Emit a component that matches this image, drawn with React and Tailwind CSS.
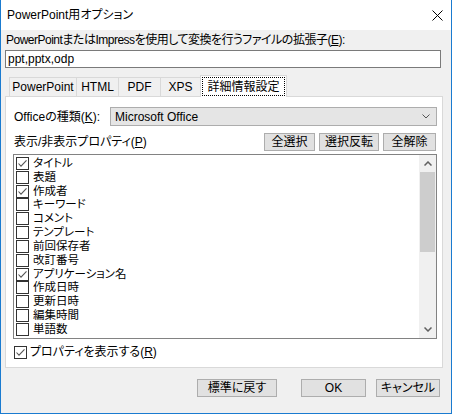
import React from "react";

function Check({ checked }) {
  return (
    <span className="w-[13px] h-[13px] shrink-0 border border-[#333] bg-white flex items-center justify-center">
      {checked && (
        <svg width="11" height="11" viewBox="0 0 11 11">
          <polyline points="1.5,5.5 4,8.2 9.5,2.3" fill="none" stroke="#555" strokeWidth="1.1" />
        </svg>
      )}
    </span>
  );
}

function Btn({ w, children }) {
  return (
    <div className={`${w} h-[18px] border border-[#adadad] bg-[#e1e1e1] flex items-center justify-center`}>{children}</div>
  );
}

const items = [
  ["タイトル", true],
  ["表題", false],
  ["作成者", true],
  ["キーワード", false],
  ["コメント", false],
  ["テンプレート", false],
  ["前回保存者", false],
  ["改訂番号", false],
  ["アプリケーション名", true],
  ["作成日時", false],
  ["更新日時", false],
  ["編集時間", false],
  ["単語数", false],
];

export default function App() {
  return (
    <div className="w-[452px] h-[414px] bg-[#f0f0f0] border-x border-b border-[#1a7bd0] flex flex-col text-[12px] leading-[14px] text-black font-['Liberation_Sans','Noto_Sans_CJK_JP',sans-serif] [font-feature-settings:'palt']">
      <div className="h-[30px] bg-white flex items-center justify-between pl-[6px] pr-[8px] shrink-0">
        <span>PowerPoint用オプション</span>
        <svg width="11" height="11" viewBox="0 0 11 11">
          <path d="M0.5 0.5 L10.5 10.5 M10.5 0.5 L0.5 10.5" stroke="#000" strokeWidth="1" />
        </svg>
      </div>
      <div className="h-[20px] pl-[5px] pt-[3px] shrink-0 tracking-[-0.5px]">
        PowerPointまたはImpressを使用して変換を行うファイルの拡張子(<span className="underline">E</span>):
      </div>
      <div className="ml-[4px] w-[436px] h-[18px] border border-[#7a7a7a] bg-white px-[2px] flex items-center shrink-0">
        ppt,pptx,odp
      </div>
      <div className="mt-[7px] h-[21px] ml-[8px] flex items-end shrink-0">
        <div className="w-[67px] h-[19px] border-t border-l border-[#d9d9d9] flex items-center justify-center">PowerPoint</div>
        <div className="w-[42px] h-[19px] border-t border-l border-[#d9d9d9] flex items-center justify-center">HTML</div>
        <div className="w-[42px] h-[19px] border-t border-l border-[#d9d9d9] flex items-center justify-center">PDF</div>
        <div className="w-[40px] h-[19px] border-t border-l border-[#d9d9d9] flex items-center justify-center">XPS</div>
        <div className="w-[87px] h-[22px] -mb-[1px] z-10 border-t border-x border-[#d9d9d9] bg-white flex p-[1px]">
          <div className="flex-1 border border-dotted border-black flex items-center justify-center">詳細情報設定</div>
        </div>
      </div>
      <div className="ml-[4px] w-[438px] h-[272px] border border-[#d9d9d9] bg-white flex flex-col pr-[5px] shrink-0">
        <div className="mt-[10px] flex items-center">
          <div className="w-[104px] pl-[8px]">
            Officeの種類(<span className="underline">K</span>):
          </div>
          <div className="w-[327px] h-[19px] border border-[#adadad] bg-[#e5e5e5] flex items-center justify-between pl-[4px] pr-[6px]">
            <span>Microsoft Office</span>
            <svg width="8" height="5" viewBox="0 0 8 5">
              <polyline points="0.5,0.5 4,4 7.5,0.5" fill="none" stroke="#555" strokeWidth="1" />
            </svg>
          </div>
        </div>
        <div className="mt-[7px] h-[18px] flex items-center justify-between pl-[8px] pr-[1px]">
          <span>
            表示/非表示プロパティ(<span className="underline">P</span>)
          </span>
          <div className="flex gap-[4px]">
            <Btn w="w-[51px]">全選択</Btn>
            <Btn w="w-[60px]">選択反転</Btn>
            <Btn w="w-[53px]">全解除</Btn>
          </div>
        </div>
        <div className="mt-[3px] ml-[7px] w-[424px] h-[185px] border border-[#828282] flex">
          <div className="flex-1 pt-[2px] pl-[2px] flex flex-col">
            {items.map(([label, c]) => (
              <div key={label} className="h-[13.83px] flex items-start gap-[4px]">
                <Check checked={c} />
                <span className="text-[11.5px] leading-[13px]">{label}</span>
              </div>
            ))}
          </div>
          <div className="w-[17px] bg-[#f0f0f0] flex flex-col">
            <div className="h-[17px] flex items-center justify-center">
              <svg width="8" height="5" viewBox="0 0 8 5">
                <polyline points="0.5,4.5 4,1 7.5,4.5" fill="none" stroke="#606060" strokeWidth="1.5" />
              </svg>
            </div>
            <div className="flex-1 flex flex-col">
              <div className="h-[80px] mx-[1px] bg-[#cdcdcd]" />
            </div>
            <div className="h-[17px] flex items-center justify-center">
              <svg width="8" height="5" viewBox="0 0 8 5">
                <polyline points="0.5,0.5 4,4 7.5,0.5" fill="none" stroke="#606060" strokeWidth="1.5" />
              </svg>
            </div>
          </div>
        </div>
        <div className="mt-[6px] ml-[8px] flex items-center gap-[3px]">
          <Check checked />
          <span>
            プロパティを表示する(<span className="underline">R</span>)
          </span>
        </div>
      </div>
      <div className="mt-[11px] flex justify-end pr-[11px] shrink-0">
        <Btn w="w-[80px]">標準に戻す</Btn>
        <div className="w-[24px]" />
        <Btn w="w-[65px]">OK</Btn>
        <div className="w-[10px]" />
        <Btn w="w-[64px]">キャンセル</Btn>
      </div>
    </div>
  );
}
